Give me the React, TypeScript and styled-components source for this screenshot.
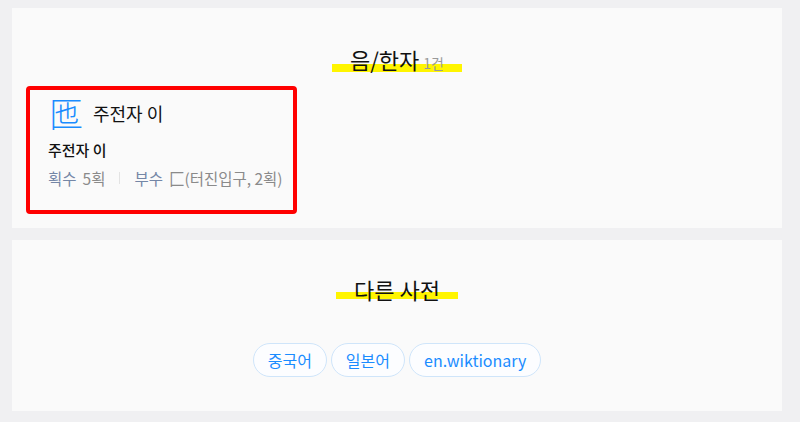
import * as React from "react";
import styled, { createGlobalStyle } from "styled-components";

const GlobalStyle = createGlobalStyle`
  html, body {
    margin: 0;
    padding: 0;
    background: #f0f0f2;
    font-family: "Noto Sans CJK KR", "Noto Sans", sans-serif;
  }
`;

const Page = styled.div`
  display: flex;
  flex-direction: column;
  gap: 12px;
  padding: 8px 18px 12px 12px;
`;

const Section = styled.section<{ $pad: string }>`
  background: #fafafa;
  padding: ${({ $pad }) => $pad};
  display: flex;
  flex-direction: column;
`;

const TitleRow = styled.div`
  display: flex;
  justify-content: center;
`;

const Title = styled.h2`
  margin: 0;
  padding: 0 18px;
  font-size: 22px;
  font-weight: 400;
  line-height: 28px;
  color: #111;
  background: linear-gradient(
    to bottom,
    transparent 60%,
    #fff500 60%,
    #fff500 84%,
    transparent 84%
  );
`;

const Count = styled.span`
  font-size: 14px;
  color: #999;
  margin-left: 4px;
`;

const Entry = styled.div`
  box-sizing: border-box;
  width: 271px;
  height: 128px;
  border: 4px solid #ff0000;
  border-radius: 4px;
  padding: 3px 4px 0 18px;
  margin-top: 9px;
  white-space: nowrap;
`;

const HeadRow = styled.div`
  display: flex;
  align-items: center;
  gap: 10px;
`;

const Hanja = styled.span`
  font-size: 34px;
  line-height: 40px;
  font-weight: 300;
  color: #1a8cff;
  margin-left: 1px;
`;

const Reading = styled.span`
  font-size: 18px;
  color: #111;
`;

const Meaning = styled.div`
  margin-top: 6px;
  font-size: 15px;
  font-weight: 500;
  color: #111;
  line-height: 22px;
`;

const InfoRow = styled.div`
  display: flex;
  align-items: center;
  margin-top: 6px;
  font-size: 15.5px;
  line-height: 22px;
`;

const Label = styled.span`
  flex-shrink: 0;
  color: #7486a6;
  margin-right: 6px;
`;

const Value = styled.span`
  flex-shrink: 0;
  color: #8a8a8a;
`;

const Divider = styled.span`
  flex-shrink: 0;
  width: 1px;
  height: 12px;
  background: #e3e3e3;
  margin: 0 14px;
`;

const Links = styled.div`
  display: flex;
  justify-content: center;
  gap: 4px;
  margin-top: 40px;
`;

const Pill = styled.a`
  display: inline-flex;
  align-items: center;
  height: 34px;
  box-sizing: border-box;
  padding: 0 14px;
  border: 1px solid #cfe5fa;
  border-radius: 17px;
  color: #1a8cff;
  font-size: 16px;
  text-decoration: none;
  background: #fcfdff;
`;

const links = ["중국어", "일본어", "en.wiktionary"];

const App = () => {
  return (
    <>
      <GlobalStyle />
      <Page>
        <Section $pad="37px 14px 14px">
          <TitleRow>
            <Title>
              음/한자<Count>1건</Count>
            </Title>
          </TitleRow>
          <Entry>
            <HeadRow>
              <Hanja>匜</Hanja>
              <Reading>주전자 이</Reading>
            </HeadRow>
            <Meaning>주전자 이</Meaning>
            <InfoRow>
              <Label>획수</Label>
              <Value>5획</Value>
              <Divider />
              <Label>부수</Label>
              <Value>匚(터진입구, 2획)</Value>
            </InfoRow>
          </Entry>
        </Section>
        <Section $pad="35px 14px 34px">
          <TitleRow>
            <Title>다른 사전</Title>
          </TitleRow>
          <Links>
            {links.map((l) => (
              <Pill key={l} href="#">
                {l}
              </Pill>
            ))}
          </Links>
        </Section>
      </Page>
    </>
  );
};

export default App;
